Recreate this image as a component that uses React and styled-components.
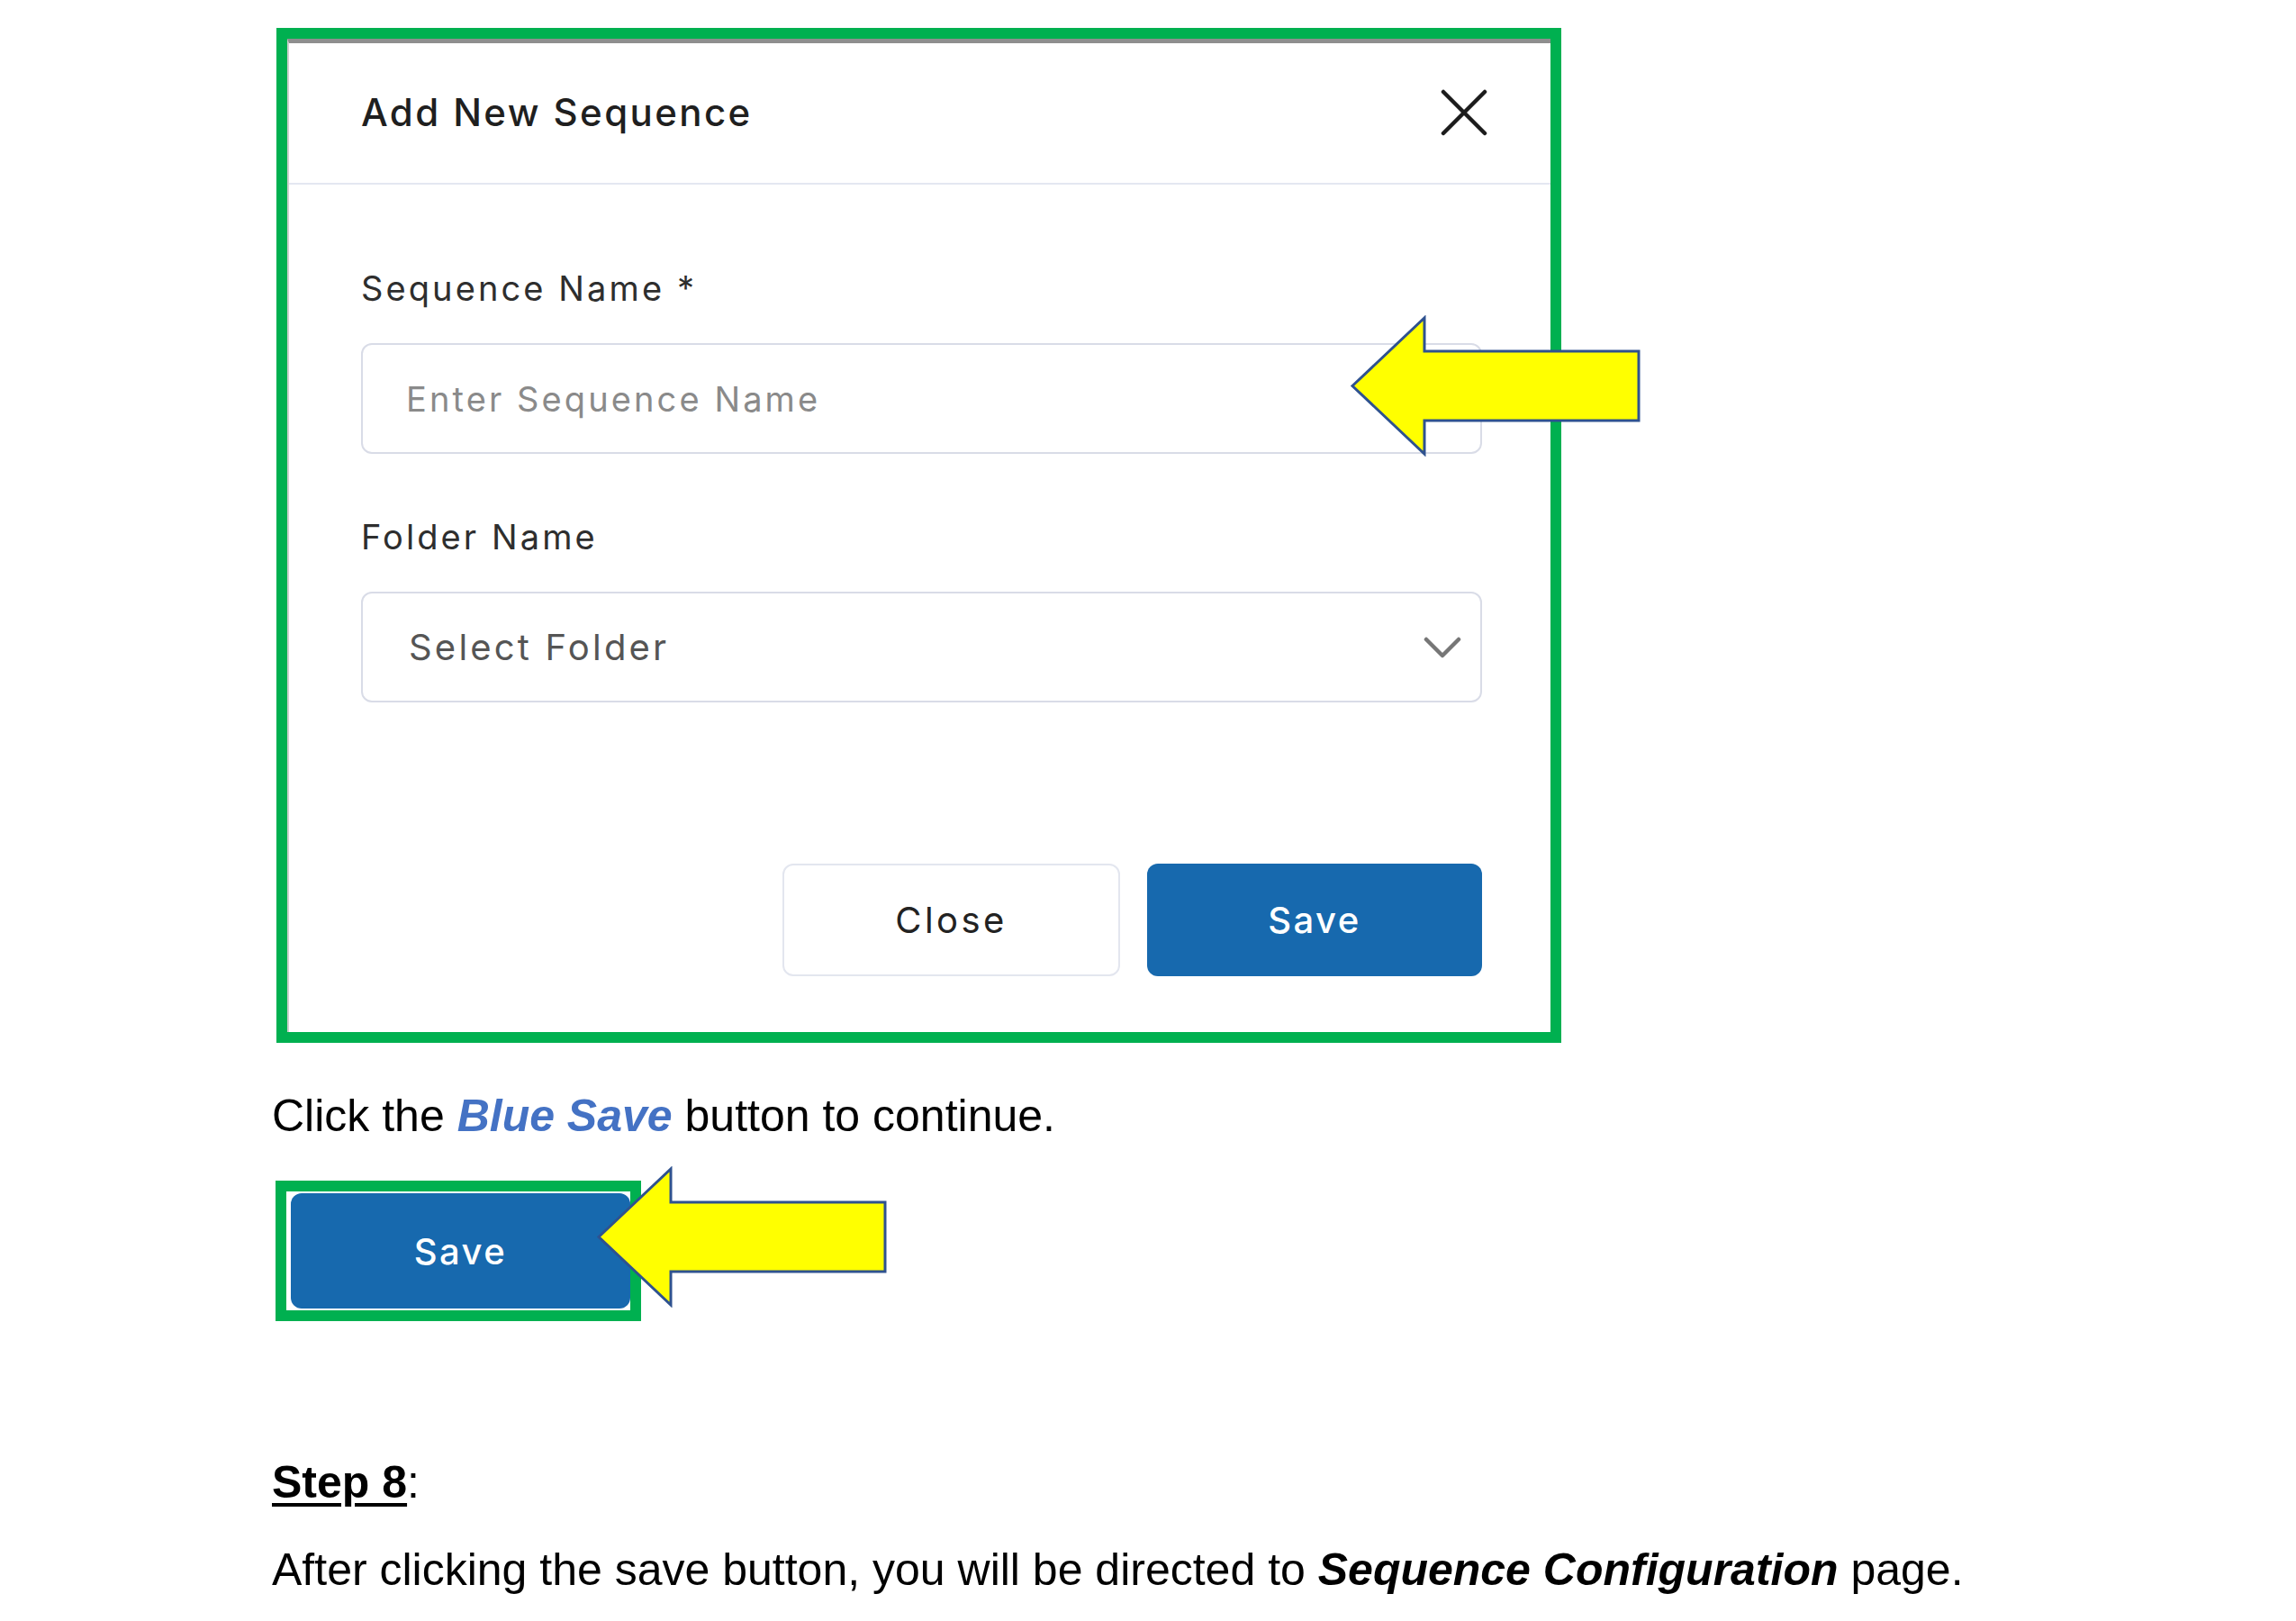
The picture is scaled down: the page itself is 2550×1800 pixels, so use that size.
import React from 'react';
import styled, { createGlobalStyle } from 'styled-components';

const uiFont = `Inter, "Noto Sans", sans-serif`;
const docFont = `"Liberation Sans", Arial, sans-serif`;
const green = '#00B050';

const GlobalStyle = createGlobalStyle`
  html, body {
    margin: 0;
    padding: 0;
    background: #ffffff;
  }
`;

const Page = styled.div`
  min-height: 1800px;
  background: #ffffff;
  padding: 31px 0 0 302px;
  box-sizing: border-box;
  font-family: ${docFont};
  color: #000;
`;

const Figure = styled.div`
  position: relative;
  width: max-content;
  margin-left: ${(p) => p.$indent}px;
`;

const Frame = styled.div`
  border: 12px solid ${green};
  background: #fff;
`;

const Modal = styled.div`
  width: 1403px;
  box-sizing: border-box;
  background: #fff;
  border-top: 5px solid #8e8e8e;
  border-left: 2px solid #cfcfcf;
  font-family: ${uiFont};
`;

const ModalHeader = styled.div`
  height: 157px;
  box-sizing: border-box;
  padding: 0 70px 2px 80px;
  display: flex;
  align-items: center;
  justify-content: space-between;
  border-bottom: 2px solid #e4e7f1;
`;

const Title = styled.h2`
  margin: 0;
  font-size: 42px;
  font-weight: 500;
  color: #1f1f1f;
  letter-spacing: 2.4px;
`;

const ModalBody = styled.div`
  padding: 92px 76px 62px 80px;
`;

const Field = styled.div`
  margin-bottom: ${(p) => p.$gap}px;
`;

const Label = styled.div`
  font-size: 38px;
  line-height: 46px;
  color: #2e2e2e;
  letter-spacing: 3.1px;
  margin-bottom: 38px;
`;

const InputBox = styled.div`
  height: 123px;
  box-sizing: border-box;
  border: 2px solid #d9dce7;
  border-radius: 12px;
  display: flex;
  align-items: center;
  justify-content: space-between;
  padding: 0 21px 0 ${(p) => p.$pad}px;
  font-size: ${(p) => p.$size}px;
  letter-spacing: ${(p) => p.$track}px;
  color: ${(p) => p.$color};
`;

const Actions = styled.div`
  display: flex;
  justify-content: flex-end;
  gap: 30px;
`;

const Button = styled.div`
  width: ${(p) => p.$w || 372}px;
  height: ${(p) => p.$h || 125}px;
  box-sizing: border-box;
  border-radius: 12px;
  display: flex;
  align-items: center;
  justify-content: center;
  font-family: ${uiFont};
  font-size: 40px;
  ${(p) =>
    p.$primary
      ? `background: #1769AE; color: #fff; font-weight: 500; letter-spacing: 2.4px;`
      : `background: #fff; color: #222; border: 2px solid #e3e6ef; letter-spacing: 3.4px;`}
`;

const Para = styled.p`
  margin: ${(p) => p.$top}px 0 0 0;
  font-size: 50px;
  line-height: 58px;
`;

const Accent = styled.em`
  font-weight: bold;
  color: #4472C4;
`;

const Strong = styled.em`
  font-weight: bold;
`;

const StepTitle = styled.span`
  font-weight: bold;
  text-decoration: underline;
  text-decoration-thickness: 4px;
  text-underline-offset: 6px;
`;

const SaveFrame = styled.div`
  border: 12px solid ${green};
  background: #fff;
  padding: 2px 0 2px 5px;
  margin-top: 43px;
`;

const ArrowWrap = styled.svg`
  position: absolute;
  left: ${(p) => p.$x}px;
  top: ${(p) => p.$y}px;
`;

function Arrow({ x, y }) {
  return (
    <ArrowWrap $x={x} $y={y} width="324" height="157" viewBox="0 0 324 157">
      <polygon
        points="3,78.5 83,3 83,40 321,40 321,117 83,117 83,154"
        fill="#FFFF00"
        stroke="#2F528F"
        strokeWidth="3"
        strokeLinejoin="miter"
      />
    </ArrowWrap>
  );
}

function CloseIcon() {
  return (
    <svg width="52" height="52" viewBox="0 0 52 52">
      <path d="M3 3 L49 49 M49 3 L3 49" stroke="#1c1c1c" strokeWidth="4.5" strokeLinecap="round" />
    </svg>
  );
}

function Chevron() {
  return (
    <svg width="42" height="24" viewBox="0 0 42 24">
      <polyline points="3,3 21,21 39,3" fill="none" stroke="#767676" strokeWidth="4.5" strokeLinecap="round" strokeLinejoin="round" />
    </svg>
  );
}

export default function App() {
  return (
    <>
      <GlobalStyle />
      <Page>
        <Figure $indent={5}>
          <Frame>
            <Modal>
              <ModalHeader>
                <Title>Add New Sequence</Title>
                <CloseIcon />
              </ModalHeader>
              <ModalBody>
                <Field $gap={69}>
                  <Label>Sequence Name *</Label>
                  <InputBox $pad={48} $size={38} $track={3.1} $color="#8a8a8a">
                    Enter Sequence Name
                  </InputBox>
                </Field>
                <Field $gap={179}>
                  <Label>Folder Name</Label>
                  <InputBox $pad={51} $size={40} $track={3.2} $color="#555555">
                    <span>Select Folder</span>
                    <Chevron />
                  </InputBox>
                </Field>
                <Actions>
                  <Button $w={375}>Close</Button>
                  <Button $primary>Save</Button>
                </Actions>
              </ModalBody>
            </Modal>
          </Frame>
          <Arrow x={1192} y={319} />
        </Figure>

        <Para $top={52}>
          Click the <Accent>Blue Save</Accent> button to continue.
        </Para>

        <Figure $indent={4}>
          <SaveFrame>
            <Button $primary $w={377} $h={128}>Save</Button>
          </SaveFrame>
          <Arrow x={356} y={-16} />
        </Figure>

        <Para $top={150}>
          <StepTitle>Step 8</StepTitle>:
        </Para>
        <Para $top={39}>
          After clicking the save button, you will be directed to <Strong>Sequence Configuration</Strong> page.
        </Para>
      </Page>
    </>
  );
}
